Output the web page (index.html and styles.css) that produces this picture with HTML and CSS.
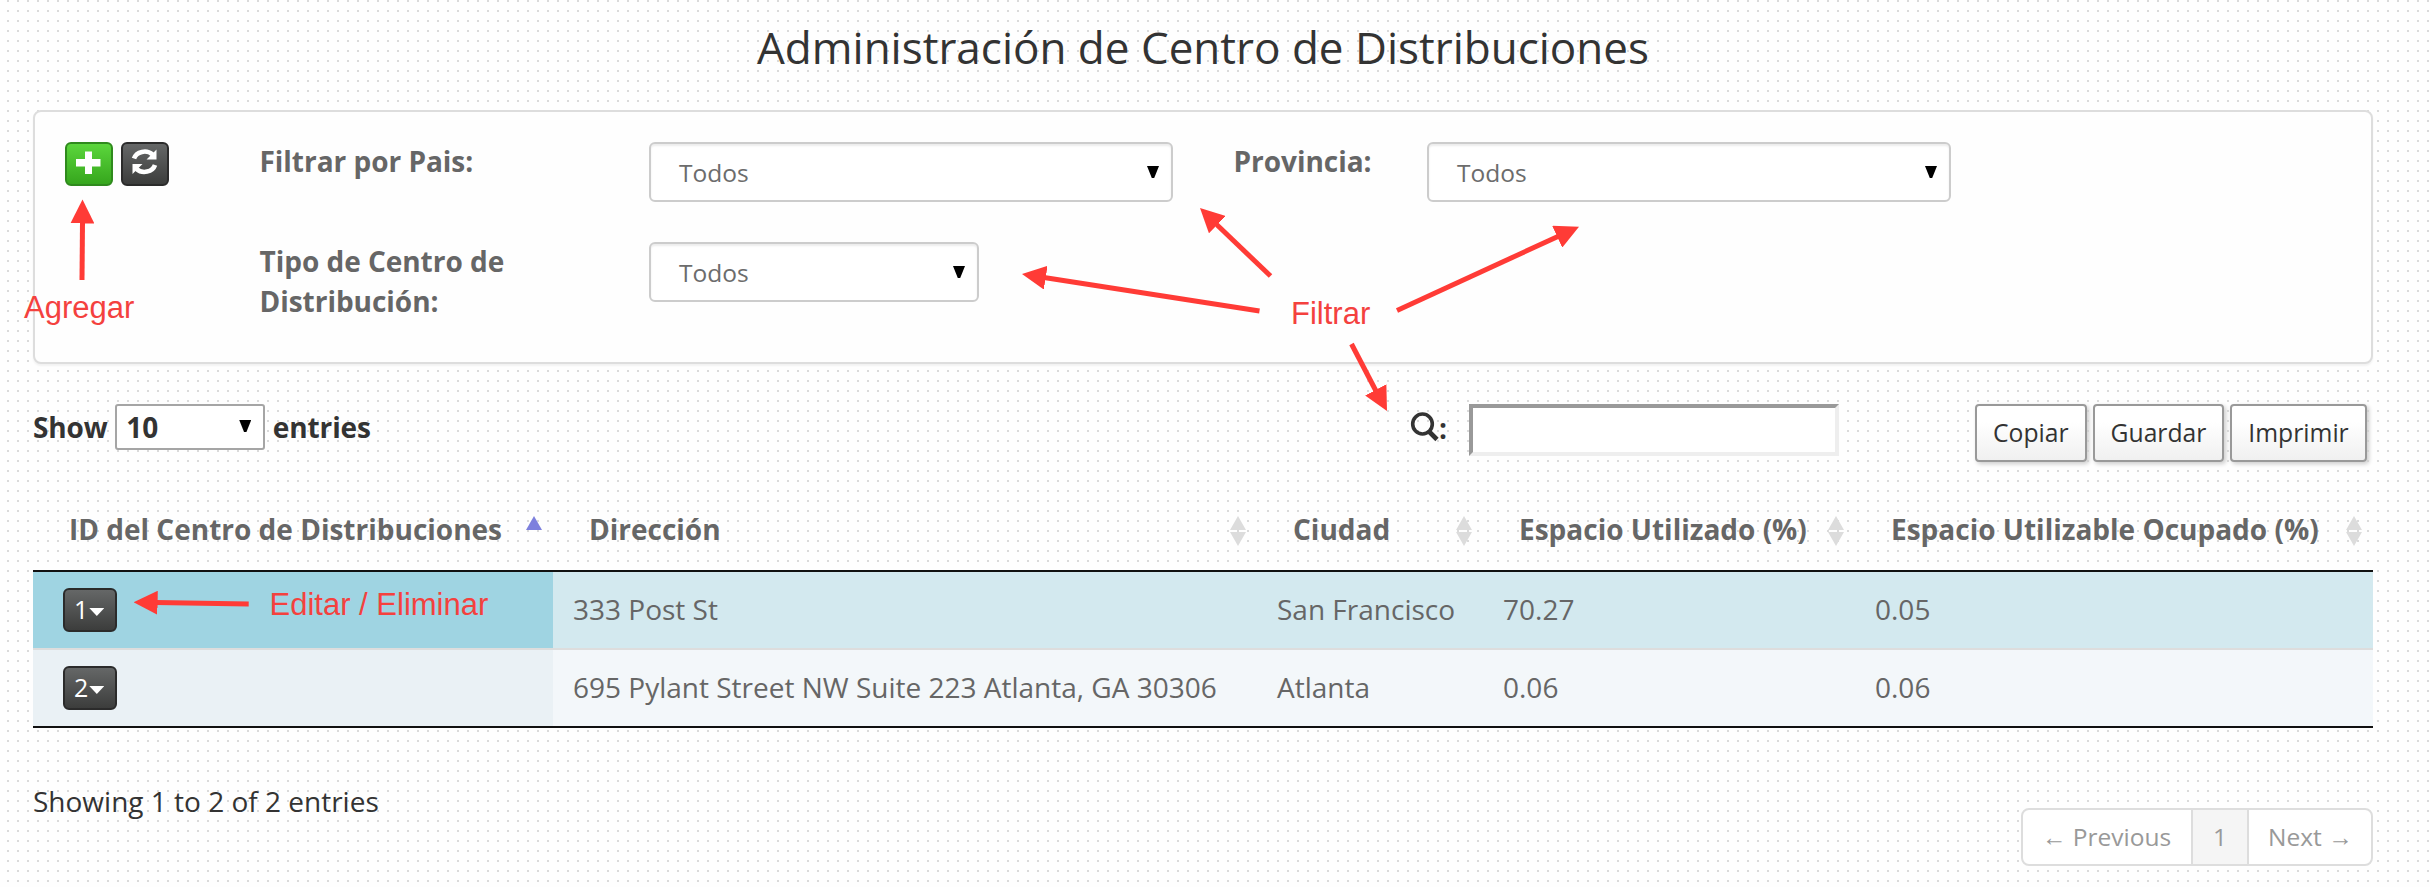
FILE: index.html
```html
<!DOCTYPE html>
<html lang="es">
<head>
<meta charset="utf-8">
<title>Administración de Centro de Distribuciones</title>
<link rel="stylesheet" href="styles.css">
</head>
<body>
<main class="page">
  <h1 class="title">Administración de Centro de Distribuciones</h1>

  <section class="filters">
    <div class="actions">
      <button class="btn btn-green" aria-label="Agregar">
        <svg class="icon" viewBox="0 0 48 44"><path d="M20 9.500h7v7.500h8.500v7.500h-8.500v7.500h-7v-7.500h-9v-7.500h9z" fill="#fff"/></svg>
      </button>
      <button class="btn btn-dark" aria-label="Actualizar">
        <svg class="icon" viewBox="0 0 48 44">
          <g fill="none" stroke="#fff" stroke-width="4.600"><path d="M13 16.500a11 9.500 0 0 1 18.500-4"/><path d="M34 23a11 9.500 0 0 1-18.500 4"/></g>
          <path d="M35.500 7.500v10h-10z M11.500 32v-10h10z" fill="#fff"/>
        </svg>
      </button>
    </div>
    <label class="label">Filtrar por Pais:</label>
    <div class="select wide"><span>Todos</span><i class="tri"></i></div>
    <label class="label">Provincia:</label>
    <div class="select wide"><span>Todos</span><i class="tri"></i></div>
    <label class="label second">Tipo de Centro de<br>Distribución:</label>
    <div class="select narrow"><span>Todos</span><i class="tri"></i></div>
  </section>

  <section class="tools">
    <div class="length"><span>Show</span><div class="length-select"><span>10</span><i class="tri"></i></div><span>entries</span></div>
    <div class="search">
      <svg class="glass" viewBox="0 0 30 30"><ellipse cx="12.500" cy="12" rx="9.800" ry="10" fill="none" stroke="#333" stroke-width="3.600"/><path d="M18.500 19l8.500 8.500" stroke="#333" stroke-width="4.600"/></svg>
      <span>:</span><div class="search-input"></div>
    </div>
    <div class="export"><button class="tool">Copiar</button><button class="tool">Guardar</button><button class="tool">Imprimir</button></div>
  </section>

  <table class="grid">
    <colgroup><col class="c1"><col class="c2"><col class="c3"><col class="c4"><col class="c5"></colgroup>
    <thead><tr>
      <th><div class="head"><span>ID del Centro de Distribuciones</span><svg class="sort" viewBox="0 0 18 30"><path d="M9 0l8 14H1z" fill="#7d80dd"/></svg></div></th>
      <th><div class="head"><span>Dirección</span><svg class="sort" viewBox="0 0 18 30"><path d="M9 0l8 14H1zM1 16h16L9 30z" fill="#dcdcdc"/></svg></div></th>
      <th><div class="head"><span>Ciudad</span><svg class="sort" viewBox="0 0 18 30"><path d="M9 0l8 14H1zM1 16h16L9 30z" fill="#dcdcdc"/></svg></div></th>
      <th><div class="head"><span>Espacio Utilizado (%)</span><svg class="sort" viewBox="0 0 18 30"><path d="M9 0l8 14H1zM1 16h16L9 30z" fill="#dcdcdc"/></svg></div></th>
      <th><div class="head"><span>Espacio Utilizable Ocupado (%)</span><svg class="sort" viewBox="0 0 18 30"><path d="M9 0l8 14H1zM1 16h16L9 30z" fill="#dcdcdc"/></svg></div></th>
    </tr></thead>
    <tbody>
      <tr class="active"><td><button class="btn btn-dark btn-id"><span>1</span><i class="caret"></i></button></td><td>333 Post St</td><td>San Francisco</td><td>70.27</td><td>0.05</td></tr>
      <tr><td><button class="btn btn-dark btn-id"><span>2</span><i class="caret"></i></button></td><td>695 Pylant Street NW Suite 223 Atlanta, GA 30306</td><td>Atlanta</td><td>0.06</td><td>0.06</td></tr>
    </tbody>
  </table>

  <footer class="footer">
    <div class="info">Showing 1 to 2 of 2 entries</div>
    <nav class="pager"><a class="prev">← Previous</a><a class="current">1</a><a class="next">Next →</a></nav>
  </footer>
</main>

<svg class="notes" viewBox="0 0 2430 887">
  <defs><marker id="head" viewBox="0 0 24 24" refX="24" refY="12" markerWidth="24" markerHeight="24" markerUnits="userSpaceOnUse" orient="auto"><path d="M0 0L24 12L0 24z" fill="#ff3b36"/></marker></defs>
  <g stroke="#ff3b36" stroke-width="5" fill="none">
    <path d="M82 280L82.500 222"/><path d="M82 280L82.500 199.500" stroke="none" marker-end="url(#head)"/>
    <path d="M1270.500 276L1214 222"/><path d="M1270.500 276L1200 208" stroke="none" marker-end="url(#head)"/>
    <path d="M1259.500 311L1044 277.500"/><path d="M1259.500 311L1022 274" stroke="none" marker-end="url(#head)"/>
    <path d="M1397 310.500L1559 236"/><path d="M1397 310.500L1579 226.700" stroke="none" marker-end="url(#head)"/>
    <path d="M1351.500 344L1376 391"/><path d="M1351.500 344L1387 411" stroke="none" marker-end="url(#head)"/>
    <path d="M248.700 604L156 602.600"/><path d="M248.700 604L133.600 602.300" stroke="none" marker-end="url(#head)"/>
  </g>
  <text x="24" y="317.500">Agregar</text>
  <text x="1291" y="324">Filtrar</text>
  <text x="269.500" y="614.500">Editar / Eliminar</text>
</svg>
</body>
</html>
```
FILE: styles.css
```css
* { box-sizing: border-box; }
body {
  margin: 0;
  height: 887px;
  overflow: hidden;
  position: relative;
  font-family: "Open Sans", "Noto Sans", sans-serif;
  font-size: 28px;
  line-height: 40px;
  color: #333;
  background: #fefefe url("data:image/svg+xml,%3Csvg xmlns='http://www.w3.org/2000/svg' width='10' height='10'%3E%3Crect x='7' width='2' height='2' fill='%23dadada'/%3E%3C/svg%3E");
}
.page { padding: 17px 57px 0 33px; }
.title { margin: 0 0 33px; font-size: 44px; line-height: 60px; font-weight: 400; text-align: center; }

.filters {
  display: grid;
  grid-template-columns: 196px 388px 586px 192px 1fr;
  grid-template-rows: 100px 100px;
  height: 254px;
  padding: 30px 30px 20px;
  border: 2px solid #ddd;
  border-radius: 8px;
  background: #fefefe;
  box-shadow: 0 2px 2px rgba(0, 0, 0, .05);
}
.actions { display: flex; gap: 8px; }
.btn { height: 44px; width: 48px; padding: 0; border: 2px solid; border-radius: 6px; color: #fff; font: inherit; display: flex; }
.btn-green { border-color: #2f8a1d; background: linear-gradient(#5bd63c, #36a61d); }
.btn-dark { border-color: #2b2b2b; background: linear-gradient(#656767, #3c3d3c); }
.icon { width: 48px; height: 44px; margin: -2px; flex: none; }
.label { font-weight: 700; color: #666; margin-top: -1px; margin-left: -1.5px; letter-spacing: -.03px; }
.second { grid-column: 2; }
.select {
  display: flex;
  justify-content: space-between;
  height: 60px;
  padding: 10px 12px 0 28px;
  border: 2px solid #ccc;
  border-radius: 6px;
  background: #fff;
  box-shadow: inset 0 2px 2px rgba(0, 0, 0, .075);
  font-size: 24.5px;
  line-height: 37px;
  color: #6c6c6c;
}
.wide { width: 524px; }
.narrow { width: 330px; }
.tri { width: 12px; height: 12px; margin-top: 12px; background: #000; clip-path: polygon(0 0, 100% 0, 60% 100%, 40% 100%); }

.tools { display: flex; height: 86px; margin-top: 40px; }
.length { display: flex; gap: 7.5px; font-weight: 700; width: 1377px; padding-top: 3px; letter-spacing: -.1px; }
.length-select { display: flex; justify-content: space-between; width: 150px; height: 46px; margin-top: -3px; padding: 1px 12px 0 9px; border: 2px solid #a5a5a5; border-radius: 3px; background: #fff; }
.length-select .tri { margin-top: 13px; }
.search { display: flex; font-weight: 700; width: 565px; }
.search > span { padding-top: 4px; width: 30px; margin-left: -1px; }
.glass { width: 30px; height: 30px; margin-top: 8px; flex: none; }
.search-input { width: 370px; height: 52px; border: 4px solid; border-color: #999 #eee #eee #999; background: #fff; }
.export { display: flex; gap: 6px; }
.tool { height: 58px; padding: 0 16px; border: 2px solid #999; border-radius: 4px; background: linear-gradient(#fff, #fff 30%, #f0f0f0); box-shadow: 2px 2px 4px #ccc; font: 24.7px/54px "Open Sans", sans-serif; color: #333; }

.grid { width: 2340px; table-layout: fixed; border-collapse: separate; border-spacing: 0; color: #666; }
.c1 { width: 520px; }
.c2 { width: 704px; }
.c3 { width: 226px; }
.c4 { width: 372px; }
.c5 { width: 518px; }
.grid th { height: 82px; padding: 19px 10px 21px 36px; border-bottom: 2px solid #111; text-align: left; font-weight: 700; white-space: nowrap; }
.head { display: flex; justify-content: space-between; }
.sort { width: 18px; height: 30px; margin-top: 7px; flex: none; }
.grid td { height: 78px; padding: 17px 0 19px 20px; border-bottom: 2px solid #ddd; background: #f3f7fa; vertical-align: top; white-space: nowrap; }
.grid td:first-child { padding: 16px 0 0 30px; background: #eaf1f5; }
.grid .active td { background: #d3e9ef; }
.grid .active td:first-child { background: #9fd4e2; }
.grid tr:last-child td { border-bottom-color: #111; }
.btn-id { width: 54px; padding: 0 9px; line-height: 38px; font-size: 25px; }
.caret { width: 15px; height: 8px; margin: 18px 0 0 1px; flex: none; background: #fff; clip-path: polygon(0 0, 100% 0, 50% 100%); }

.footer { display: flex; justify-content: space-between; padding-top: 53px; }
.pager { display: flex; height: 58px; width: 352px; margin-top: 27px; border: 2px solid #ddd; border-radius: 8px; background: #fff; font-size: 24.5px; line-height: 54px; color: #999; overflow: hidden; }
.prev { width: 168px; padding-left: 19px; white-space: nowrap; }
.current { width: 58px; text-align: center; border: solid #ddd; border-width: 0 2px; background: #f5f5f5; }
.next { padding-left: 19px; white-space: nowrap; }

.notes { position: absolute; left: 0; top: 0; width: 2430px; height: 887px; pointer-events: none; }
.notes text { font: 31px "Liberation Sans", sans-serif; fill: #f4413e; }
```
